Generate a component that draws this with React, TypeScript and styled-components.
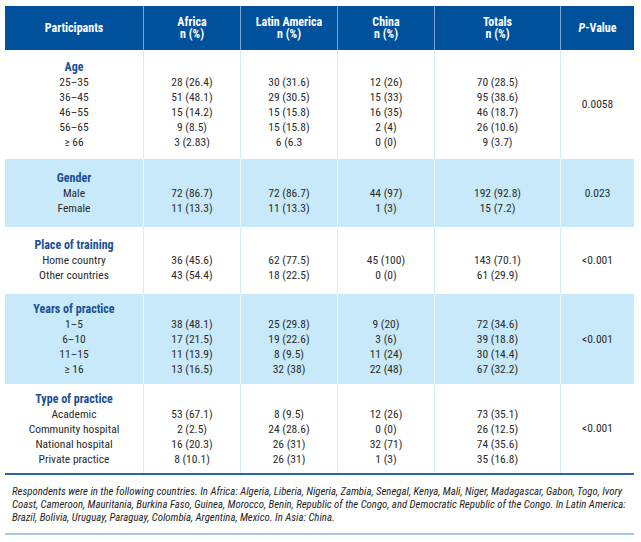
import React from 'react';
import styled, { createGlobalStyle } from 'styled-components';

// Condensed face first, fall back to DejaVu condensed
const FONT = `"Roboto Condensed", "DejaVu Sans Condensed", "Liberation Sans", sans-serif`;

type Section = {
  title: string;
  labels: string[];
  africa: string[];
  latin: string[];
  china: string[];
  totals: string[];
  p: string;
  shaded: boolean;
  pad: [number, number];
};

const sections: Section[] = [
  {
    title: 'Age',
    labels: ['25–35', '36–45', '46–55', '56–65', '≥ 66'],
    africa: ['28 (26.4)', '51 (48.1)', '15 (14.2)', '9 (8.5)', '3 (2.83)'],
    latin: ['30 (31.6)', '29 (30.5)', '15 (15.8)', '15 (15.8)', '6 (6.3'],
    china: ['12 (26)', '15 (33)', '16 (35)', '2 (4)', '0 (0)'],
    totals: ['70 (28.5)', '95 (38.6)', '46 (18.7)', '26 (10.6)', '9 (3.7)'],
    p: '0.0058',
    shaded: false,
    pad: [10, 9],
  },
  {
    title: 'Gender',
    labels: ['Male', 'Female'],
    africa: ['72 (86.7)', '11 (13.3)'],
    latin: ['72 (86.7)', '11 (13.3)'],
    china: ['44 (97)', '1 (3)'],
    totals: ['192 (92.8)', '15 (7.2)'],
    p: '0.023',
    shaded: true,
    pad: [12, 11],
  },
  {
    title: 'Place of training',
    labels: ['Home country', 'Other countries'],
    africa: ['36 (45.6)', '43 (54.4)'],
    latin: ['62 (77.5)', '18 (22.5)'],
    china: ['45 (100)', '0 (0)'],
    totals: ['143 (70.1)', '61 (29.9)'],
    p: '<0.001',
    shaded: false,
    pad: [11, 11],
  },
  {
    title: 'Years of practice',
    labels: ['1–5', '6–10', '11–15', '≥ 16'],
    africa: ['38 (48.1)', '17 (21.5)', '11 (13.9)', '13 (16.5)'],
    latin: ['25 (29.8)', '19 (22.6)', '8 (9.5)', '32 (38)'],
    china: ['9 (20)', '3 (6)', '11 (24)', '22 (48)'],
    totals: ['72 (34.6)', '39 (18.8)', '30 (14.4)', '67 (32.2)'],
    p: '<0.001',
    shaded: true,
    pad: [8, 7],
  },
  {
    title: 'Type of practice',
    labels: ['Academic', 'Community hospital', 'National hospital', 'Private practice'],
    africa: ['53 (67.1)', '2 (2.5)', '16 (20.3)', '8 (10.1)'],
    latin: ['8 (9.5)', '24 (28.6)', '26 (31)', '26 (31)'],
    china: ['12 (26)', '0 (0)', '32 (71)', '1 (3)'],
    totals: ['73 (35.1)', '26 (12.5)', '74 (35.6)', '35 (16.8)'],
    p: '<0.001',
    shaded: false,
    pad: [8, 6],
  },
];

const GlobalStyle = createGlobalStyle`
  body {
    margin: 0;
    background: #ffffff;
    font-family: ${FONT};
  }
`;

const Page = styled.div`
  width: 641px;
  padding: 6px 7px 0 5px;
  box-sizing: border-box;
`;

const COLUMNS = '138px 97px 97px 97px 126px 74px';

const HeaderRow = styled.div`
  display: grid;
  grid-template-columns: ${COLUMNS};
  height: 44px;
  background: #00519b;
`;

const HeaderCell = styled.div<{ $first?: boolean }>`
  display: flex;
  flex-direction: column;
  align-items: center;
  justify-content: center;
  color: #ffffff;
  font-weight: 700;
  font-size: 12px;
  line-height: 12.5px;
  text-align: center;
  border-left: ${(p) => (p.$first ? 'none' : '1px solid #7fa6d2')};
`;

const Body = styled.div`
  border-bottom: 2px solid #2b66a9;
`;

const SectionRow = styled.div<{ $shaded: boolean }>`
  display: grid;
  grid-template-columns: ${COLUMNS};
  background: ${(p) => (p.$shaded ? '#c8e9f9' : '#ffffff')};
  color: #2b2b2b;
  font-size: 11.5px;
  line-height: 15px;
`;

const Cell = styled.div<{ $shaded: boolean; $first?: boolean; $top: number; $bottom: number }>`
  padding: ${(p) => `${p.$top}px 2px ${p.$bottom}px`};
  text-align: center;
  white-space: nowrap;
  border-left: ${(p) => (p.$first ? 'none' : `1px solid ${p.$shaded ? '#e8f6fd' : '#d3edfa'}`)};
`;

const PCell = styled.div<{ $shaded: boolean }>`
  display: flex;
  align-items: center;
  justify-content: center;
  border-left: 1px solid ${(p) => (p.$shaded ? '#e8f6fd' : '#d3edfa')};
`;

const SectionTitle = styled.div`
  color: #1a4f94;
  font-weight: 700;
  font-size: 12px;
`;

const Footnote = styled.p`
  margin: 0;
  padding: 10px 7px 9px;
  font-style: italic;
  font-size: 10.8px;
  line-height: 13px;
  color: #1e1e1e;
  border-bottom: 2px solid #a9c6e3;
`;

function App() {
  return (
    <Page>
      <GlobalStyle />
      <HeaderRow>
        <HeaderCell $first>Participants</HeaderCell>
        <HeaderCell>
          <span>Africa</span>
          <span>n (%)</span>
        </HeaderCell>
        <HeaderCell>
          <span>Latin America</span>
          <span>n (%)</span>
        </HeaderCell>
        <HeaderCell>
          <span>China</span>
          <span>n (%)</span>
        </HeaderCell>
        <HeaderCell>
          <span>Totals</span>
          <span>n (%)</span>
        </HeaderCell>
        <HeaderCell>
          <span>
            <i>P</i>-Value
          </span>
        </HeaderCell>
      </HeaderRow>

      <Body>
        {sections.map((s) => {
          const [top, bottom] = s.pad;
          const cols = [s.africa, s.latin, s.china, s.totals];
          return (
            <SectionRow key={s.title} $shaded={s.shaded}>
              <Cell $first $shaded={s.shaded} $top={top} $bottom={bottom}>
                <SectionTitle>{s.title}</SectionTitle>
                {s.labels.map((l) => (
                  <div key={l}>{l}</div>
                ))}
              </Cell>
              {cols.map((col, i) => (
                <Cell key={i} $shaded={s.shaded} $top={top + 15} $bottom={bottom}>
                  {col.map((v, j) => (
                    <div key={j}>{v}</div>
                  ))}
                </Cell>
              ))}
              <PCell $shaded={s.shaded}>{s.p}</PCell>
            </SectionRow>
          );
        })}
      </Body>

      <Footnote>
        Respondents were in the following countries. In Africa: Algeria, Liberia, Nigeria, Zambia,
        Senegal, Kenya, Mali, Niger, Madagascar, Gabon, Togo, Ivory Coast, Cameroon, Mauritania,
        Burkina Faso, Guinea, Morocco, Benin, Republic of the Congo, and Democratic Republic of the
        Congo. In Latin America: Brazil, Bolivia, Uruguay, Paraguay, Colombia, Argentina, Mexico. In
        Asia: China.
      </Footnote>
    </Page>
  );
}

export default App;
